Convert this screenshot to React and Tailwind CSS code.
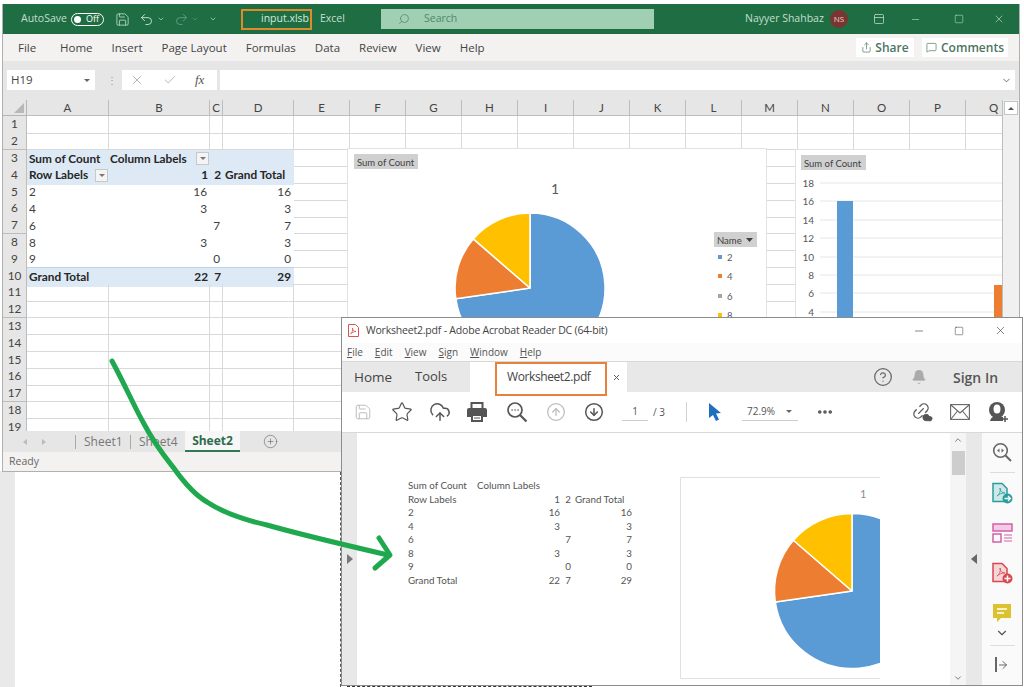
import {
  Save, Undo2, Redo2, ChevronDown, ChevronUp, Search, Minus, Square, X, Share, MessageSquare, Check,
  CircleHelp, Bell, Star, CloudUpload, CircleArrowUp, CircleArrowDown, Ellipsis, Link2, Cloud,
  PanelTop, CirclePlus, ArrowRight,
} from 'lucide-react'

const columns = ['A', 'B', 'C', 'D', 'E', 'F', 'G', 'H', 'I', 'J', 'K', 'L', 'M', 'N', 'O', 'P', 'Q']
const rowNumbers = Array.from({ length: 19 }, (_, i) => i + 1)

const pivot = {
  5: ['2', '16', '', '16'],
  6: ['4', '3', '', '3'],
  7: ['6', '', '7', '7'],
  8: ['8', '3', '', '3'],
  9: ['9', '', '0', '0'],
}

const pdfRows = [
  ['2', '16', '', '16'],
  ['4', '3', '', '3'],
  ['6', '', '7', '7'],
  ['8', '3', '', '3'],
  ['9', '', '0', '0'],
  ['Grand Total', '22', '7', '29'],
]

function FilterButton({ className }) {
  return (
    <span className={`flex h-[13px] w-[13px] items-center justify-center border border-[#c8c8c8] bg-[#f4f4f4] ${className}`}>
      <span className="h-0 w-0 border-x-[3px] border-t-[3px] border-x-transparent border-t-[#777]"></span>
    </span>
  )
}

function SheetCell({ row, col }) {
  const plain = 'border-r border-b border-[#d9d9d9]'
  const blue = 'bg-[#dde9f5] border-b border-[#dde9f5]'
  if (row === 3 || row === 4 || row === 10) {
    const bold = 'flex items-center font-bold text-[#262626] whitespace-nowrap'
    if (col === 'A' && row === 3) return <div className={`${blue} ${bold} pl-[2px]`}>Sum of Count</div>
    if (col === 'A' && row === 4) return <div className={`${blue} ${bold} pl-[2px] justify-between pr-[1px]`}>Row Labels<FilterButton /></div>
    if (col === 'A') return <div className={`${blue} ${bold} pl-[2px] border-t border-t-[#b9d2ea]`}>Grand Total</div>
    if (row === 3) {
      if (col === 'B') return <div className={`${blue} ${bold} pl-[1px] justify-between pr-[1px]`}>Column Labels<FilterButton /></div>
      if (col === 'C' || col === 'D') return <div className={blue}></div>
    }
    if (row === 4) {
      if (col === 'B') return <div className={`${blue} ${bold} justify-end pr-[2px]`}>1</div>
      if (col === 'C') return <div className={`${blue} ${bold} justify-end pr-[2px]`}>2</div>
      if (col === 'D') return <div className={`${blue} ${bold} pl-[2px]`}>Grand Total</div>
    }
    if (row === 10) {
      if (col === 'B') return <div className={`${blue} ${bold} justify-end pr-[2px] border-t border-t-[#b9d2ea]`}>22</div>
      if (col === 'C') return <div className={`${blue} ${bold} justify-end pr-[2px] border-t border-t-[#b9d2ea]`}>7</div>
      if (col === 'D') return <div className={`${blue} ${bold} justify-end pr-[3px] border-t border-t-[#b9d2ea]`}>29</div>
    }
  }
  if (pivot[row] && 'ABCD'.includes(col)) {
    const value = pivot[row]['ABCD'.indexOf(col)]
    if (col === 'A') return <div className="flex items-center pl-[2px] text-[#404040]">{value}</div>
    return <div className="flex items-center justify-end pr-[3px] text-[#404040]">{value}</div>
  }
  return <div className={plain}></div>
}

function PieChart({ cx, cy, r }) {
  const point = (deg) => {
    const a = (deg * Math.PI) / 180
    return `${(cx + r * Math.sin(a)).toFixed(1)} ${(cy - r * Math.cos(a)).toFixed(1)}`
  }
  return (
    <g stroke="#fff" strokeWidth="1.5" strokeLinejoin="round">
      <path d={`M${cx} ${cy} L${point(0)} A${r} ${r} 0 1 1 ${point(261.8)} Z`} fill="#5b9bd5" />
      <path d={`M${cx} ${cy} L${point(261.8)} A${r} ${r} 0 0 1 ${point(310.9)} Z`} fill="#ed7d31" />
      <path d={`M${cx} ${cy} L${point(310.9)} A${r} ${r} 0 0 1 ${point(360)} Z`} fill="#ffc000" />
    </g>
  )
}

function ChartOne() {
  return (
    <svg className="absolute left-[344px] top-[48px]" width="420" height="230" viewBox="347 148 420 230">
      <rect x="347.5" y="148.5" width="419" height="240" fill="#fff" stroke="#e2e2e2" />
      <rect x="354" y="154" width="64" height="15" fill="#d0d0d0" />
      <text x="357" y="165.5" fontSize="9.5" fill="#404040" fontFamily="Lato, sans-serif">Sum of Count</text>
      <text x="551" y="194" fontSize="14" fill="#595959" fontFamily="Lato, sans-serif">1</text>
      <PieChart cx={530} cy={288} r={75} />
      <rect x="714" y="232" width="43" height="15" fill="#d0d0d0" />
      <text x="717" y="243.5" fontSize="9.5" fill="#404040" fontFamily="Lato, sans-serif">Name</text>
      <path d="M746 238h7l-3.500 4z" fill="#404040" />
      <rect x="718" y="255" width="4" height="4" fill="#5b9bd5" />
      <text x="727" y="260.500" fontSize="9.5" fill="#595959" fontFamily="Lato, sans-serif">2</text>
      <rect x="718" y="274" width="4" height="4" fill="#ed7d31" />
      <text x="727" y="279.500" fontSize="9.5" fill="#595959" fontFamily="Lato, sans-serif">4</text>
      <rect x="718" y="294" width="4" height="4" fill="#a5a5a5" />
      <text x="727" y="299.500" fontSize="9.5" fill="#595959" fontFamily="Lato, sans-serif">6</text>
      <rect x="718" y="313" width="4" height="4" fill="#ffc000" />
      <text x="727" y="318.500" fontSize="9.5" fill="#595959" fontFamily="Lato, sans-serif">8</text>
    </svg>
  )
}

function ChartTwo() {
  const ticks = [[18, 183], [16, 201], [14, 220], [12, 238], [10, 257], [8, 275], [6, 293], [4, 312]]
  return (
    <svg className="absolute left-[792px] top-[49px]" width="207" height="230" viewBox="795 149 207 230">
      <rect x="795.5" y="149.500" width="230" height="240" fill="#fff" stroke="#e2e2e2" />
      <rect x="801" y="155" width="65" height="15" fill="#d0d0d0" />
      <text x="804" y="166.500" fontSize="9.5" fill="#404040" fontFamily="Lato, sans-serif">Sum of Count</text>
      {ticks.map(([label, y]) => (
        <g key={label}>
          <line x1="820" x2="1002" y1={y} y2={y} stroke="#e6e6e6" />
          <text x="814" y={y + 3.5} textAnchor="end" fontSize="10" fill="#595959" fontFamily="Lato, sans-serif">{label}</text>
        </g>
      ))}
      <rect x="837" y="201" width="16" height="130" fill="#5b9bd5" />
      <rect x="994" y="285" width="9" height="50" fill="#ed7d31" />
    </svg>
  )
}

function ExcelWindow() {
  return (
    <div className="absolute left-[2px] top-[4px] flex h-[468px] w-[1018px] flex-col overflow-hidden border-x border-b border-[#b0b0b0] bg-white">
      {/* title bar */}
      <div className="flex h-[30px] shrink-0 items-center bg-[#1f6e43] text-[10.5px] text-[#c3dfce]">
        <span className="ml-[18px] w-[44px]">AutoSave</span>
        <span className="ml-[6px] flex h-[13px] w-[33px] items-center justify-between rounded-full border border-white pl-[2px] pr-[4px] text-[9px] text-white">
          <span className="h-[7px] w-[7px] rounded-full bg-white"></span>Off
        </span>
        <Save className="ml-[11px] shrink-0 text-[#c3dfce]" size={15} strokeWidth={1.3} />
        <Undo2 className="ml-[9px] shrink-0 text-[#c3dfce]" size={15} strokeWidth={1.5} />
        <ChevronDown className="ml-[3px] shrink-0" size={8} strokeWidth={2} />
        <Redo2 className="ml-[9px] shrink-0 text-[#5f9c7d]" size={15} strokeWidth={1.5} />
        <ChevronDown className="ml-[2px] shrink-0 text-[#5f9c7d]" size={8} strokeWidth={2} />
        <ChevronDown className="ml-[10px] shrink-0" size={8} strokeWidth={2} />
        <span className="ml-[24px] flex h-[21px] w-[71px] shrink-0 items-center border-2 border-[#e08a2e] pl-[18px] text-[#d5e9dc]">input.xlsb</span>
        <span className="ml-[8px] w-[23px]">Excel</span>
        <span className="ml-[38px] flex h-[20px] w-[273px] shrink-0 items-center bg-[#a0cfb3] pl-[17px] text-[#4f8a69]">
          <Search className="-scale-x-100" size={12} strokeWidth={1.5} />
          <span className="ml-[14px]">Search</span>
        </span>
        <span className="ml-[91px] w-[75px] whitespace-nowrap">Nayyer Shahbaz</span>
        <span className="ml-[10px] flex h-[18px] w-[18px] shrink-0 items-center justify-center rounded-full bg-[#7b3531] text-[8px] text-[#e8d5d3]">NS</span>
        <PanelTop className="ml-[25px] shrink-0" size={12} strokeWidth={1.5} />
        <Minus className="ml-[25px] shrink-0" size={11} strokeWidth={1.3} />
        <Square className="ml-[33px] shrink-0" size={10} strokeWidth={1.3} />
        <X className="ml-[29px] shrink-0" size={12} strokeWidth={1.3} />
      </div>

      {/* ribbon tabs */}
      <div className="flex h-[27px] shrink-0 items-center bg-[#f3f2f1] text-[11.5px] text-[#444]">
        <span className="ml-[15px] w-[42px]">File</span>
        <div className="flex gap-[19px]">
          <span>Home</span>
          <span>Insert</span>
          <span>Page Layout</span>
          <span>Formulas</span>
          <span>Data</span>
          <span>Review</span>
          <span>View</span>
          <span>Help</span>
        </div>
        <div className="ml-auto mr-[11px] flex gap-[8px] text-[12px] font-semibold text-[#4c7563]">
          <span className="flex h-[19px] w-[58px] items-center justify-center gap-[3px] bg-white">
            <Share size={11} strokeWidth={1.5} />Share
          </span>
          <span className="flex h-[19px] w-[86px] items-center justify-center gap-[4px] bg-white">
            <MessageSquare size={11} strokeWidth={1.5} />Comments
          </span>
        </div>
      </div>

      {/* formula bar */}
      <div className="flex h-[39px] shrink-0 items-center bg-[#e6e6e6] pb-[1px] text-[11.5px] text-[#444]">
        <span className="ml-[4px] flex h-[20px] w-[88px] items-center justify-between bg-white pl-[4px] pr-[5px]">
          H19
          <span className="h-0 w-0 border-x-[3px] border-t-[3px] border-x-transparent border-t-[#666]"></span>
        </span>
        <span className="ml-[12px] w-[3px] text-[10px] leading-none text-[#999]">⋮</span>
        <span className="ml-[12px] flex h-[20px] w-[95px] items-center bg-white text-[#aaa]">
          <X className="ml-[8px]" size={14} strokeWidth={1.5} />
          <Check className="ml-[19px]" size={14} strokeWidth={1.5} />
          <span className="ml-[18px] font-['Liberation_Serif',serif] text-[13px] italic text-[#555]">fx</span>
        </span>
        <span className="ml-[3px] flex h-[20px] w-[795px] items-center justify-end bg-white pr-[3px] text-[#666]">
          <ChevronDown size={11} strokeWidth={2} />
        </span>
      </div>

      {/* sheet */}
      <div className="relative flex h-[331px] shrink-0 overflow-hidden bg-white">
        <div className="w-[999px] shrink-0 overflow-hidden">
          <div className="grid w-[1019px] grid-cols-[24px_82px_101px_13px_71px_56px_56px_56px_56px_56px_56px_56px_56px_56px_56px_56px_56px_56px] auto-rows-[16.8px] font-['Lato',sans-serif] text-[11.8px]">
            <div className="flex h-[16px] items-end justify-end border-r border-b border-[#b5b5b5] bg-[#e6e6e6] pb-[2px] pr-[2px]">
              <span className="h-0 w-0 border-b-[10px] border-l-[10px] border-b-[#b8b8b8] border-l-transparent"></span>
            </div>
            {columns.map((c) => (
              <div key={c} className="flex h-[16px] items-center justify-center border-r border-b border-[#bdbdbd] bg-[#e6e6e6] text-[11.5px] text-[#444]">{c}</div>
            ))}
            {rowNumbers.map((row) => [
              <div key={`r${row}`} className="-mt-[0.8px] flex items-center justify-center border-r border-b border-[#bdbdbd] bg-[#e6e6e6] text-[#444]">{row}</div>,
              ...columns.map((col) => (
                <div key={`${col}${row}`} className="-mt-[0.8px] grid">
                  <SheetCell row={row} col={col} />
                </div>
              )),
            ])}
          </div>
        </div>
        <div className="flex w-[17px] shrink-0 flex-col items-center border-l border-[#bdbdbd] bg-[#f0f0f0] pt-[1px]">
          <span className="flex h-[14px] w-[14px] items-center justify-center border border-[#c4c4c4] bg-white">
            <span className="h-0 w-0 border-x-[3px] border-b-[3px] border-x-transparent border-b-[#555]"></span>
          </span>
        </div>
        <ChartOne />
        <ChartTwo />
      </div>

      {/* sheet tabs */}
      <div className="flex h-[21px] shrink-0 items-center bg-[#e6e6e6] text-[12px] text-[#777]">
        <span className="ml-[20px] h-0 w-0 border-y-[3px] border-r-[4px] border-y-transparent border-r-[#bbb]"></span>
        <span className="ml-[15px] h-0 w-0 border-y-[3px] border-l-[4px] border-y-transparent border-l-[#bbb]"></span>
        <span className="ml-[29px] h-[14px] w-px bg-[#aaa]"></span>
        <span className="ml-[8px] w-[36px]">Sheet1</span>
        <span className="ml-[10px] h-[14px] w-px bg-[#aaa]"></span>
        <span className="ml-[8px] w-[36px]">Sheet4</span>
        <span className="ml-[10px] flex h-[21px] w-[55px] items-center justify-center border-b-2 border-[#2f7a52] bg-[#f7f7f7] font-bold text-[#2f6b4d]">Sheet2</span>
        <CirclePlus className="ml-[23px] text-[#666]" size={15} strokeWidth={1} />
      </div>

      {/* status bar */}
      <div className="flex h-[19px] shrink-0 items-center bg-[#f3f2f1] pl-[6px] text-[10.5px] text-[#666]">Ready</div>
    </div>
  )
}

function DocIcon({ color, badge }) {
  return (
    <svg width="22" height="22" viewBox="0 0 22 22" fill="none">
      <path d="M2 1.500h9l5 5v13H2z" fill={`${color}33`} stroke={color} strokeWidth="1.500" />
      <path d="M6 14c2-1 4-5 3-8 0 3 2 5 5 5-3 0-6 1-8 3z" stroke={color} strokeWidth="0.800" />
      <circle cx="16.500" cy="16.500" r="5" fill={color} />
      {badge === 'arrow' ? (
        <path d="M13.500 16.500h6M17 14l2.500 2.500L17 19" stroke="#fff" strokeWidth="1.300" />
      ) : (
        <path d="M13.500 16.500h6M16.500 13.500v6" stroke="#fff" strokeWidth="1.500" />
      )}
    </svg>
  )
}

function AcrobatWindow() {
  return (
    <div className="absolute left-[341px] top-[317px] flex h-[369px] w-[682px] flex-col overflow-hidden border border-[#8c8c8c] bg-white font-['Open_Sans',sans-serif] text-[#444]">
      <div className="flex h-[25px] shrink-0 items-center text-[10.5px] tracking-[-0.2px]">
        <svg className="ml-[6px]" width="11" height="13" viewBox="0 0 11 13" fill="none">
          <path d="M.500.500h7l3 3v9H.500z" fill="#fff" stroke="#d9534f" />
          <path d="M2.500 10c1.500-1 2.500-3.500 2-6 0 2 1.500 3.500 3.500 3.500-2 0-4 1-5.500 2.500z" stroke="#d9534f" strokeWidth=".8" />
        </svg>
        <span className="ml-[7px] w-[244px] whitespace-nowrap">Worksheet2.pdf - Adobe Acrobat Reader DC (64-bit)</span>
        <Minus className="ml-[303px] shrink-0" size={12} strokeWidth={1.3} />
        <Square className="ml-[29px] shrink-0" size={10} strokeWidth={1.3} />
        <X className="ml-[30px] shrink-0" size={13} strokeWidth={1.2} />
      </div>

      <div className="flex h-[18px] shrink-0 items-center gap-[12px] bg-[#fbfbfb] pl-[5px] text-[10px] text-[#555]">
        <span><u>F</u>ile</span>
        <span><u>E</u>dit</span>
        <span><u>V</u>iew</span>
        <span><u>S</u>ign</span>
        <span><u>W</u>indow</span>
        <span><u>H</u>elp</span>
      </div>

      <div className="flex h-[31px] shrink-0 items-center border-t border-[#d8d8d8] bg-[#e8e8e8] text-[13.5px]">
        <span className="ml-[12px] w-[38px]">Home</span>
        <span className="ml-[23px] w-[33px] whitespace-nowrap text-[13px]">Tools</span>
        <div className="relative ml-[22px] flex h-[31px] w-[157px] items-center bg-white">
          <span className="ml-[37px] w-[84px] whitespace-nowrap text-[12px] tracking-[-0.4px]">Worksheet2.pdf</span>
          <X className="ml-[21px] text-[#555]" size={9} strokeWidth={2.500} />
        </div>
        <CircleHelp className="ml-[246px] shrink-0 text-[#666]" size={20} strokeWidth={1.500} />
        <Bell className="ml-[18px] shrink-0 text-[#aaa]" size={16} fill="#aaa" strokeWidth={1} />
        <span className="ml-[26px] w-[48px] whitespace-nowrap text-[14px] font-semibold text-[#555]">Sign In</span>
      </div>

      <div className="flex h-[41px] shrink-0 items-center border-b border-[#d8d8d8] text-[#555]">
        <Save className="ml-[12px] shrink-0 text-[#bbb]" size={18} strokeWidth={1.300} />
        <Star className="ml-[19px] shrink-0" size={22} strokeWidth={1.300} />
        <CloudUpload className="ml-[16px] shrink-0" size={22} strokeWidth={1.600} />
        <svg className="ml-[15px] shrink-0" width="22" height="22" viewBox="0 0 22 22" fill="none">
          <path d="M5.500 7V2h11v5" stroke="#555" strokeWidth="2" />
          <path d="M3 7h16a2 2 0 0 1 2 2v7h-4v-3H5v3H1V9a2 2 0 0 1 2-2z" fill="#555" />
          <rect x="6" y="14" width="10" height="6" stroke="#555" strokeWidth="2" />
          <path d="M8 17h6" stroke="#555" />
        </svg>
        <svg className="ml-[18px] shrink-0" width="22" height="22" viewBox="0 0 22 22" fill="none" stroke="currentColor" strokeWidth="1.700">
          <circle cx="9" cy="9" r="7" />
          <path d="M14 14l6.500 6.500" strokeWidth="2.200" />
          <path d="M5.500 9h1.200M8.500 9h1.200M11.500 9h1.200" />
        </svg>
        <CircleArrowUp className="ml-[18px] shrink-0 text-[#bbb]" size={20} strokeWidth={1.500} />
        <CircleArrowDown className="ml-[18px] shrink-0" size={20} strokeWidth={1.800} />
        <span className="ml-[18px] w-[26px] border-b border-[#ccc] pb-[1px] text-center text-[10px]">1</span>
        <span className="ml-[5px] w-[15px] whitespace-nowrap text-[10px]">/ 3</span>
        <span className="ml-[18px] h-[20px] w-px bg-[#d0d0d0]"></span>
        <svg className="ml-[21px] shrink-0" width="14" height="20" viewBox="0 0 14 20">
          <path d="M1 1l12 10-5 .5 3 6-3 1.500-3-6L1 16z" fill="#1f6fc0" />
        </svg>
        <span className="ml-[20px] flex w-[56px] items-center justify-between border-b border-[#ccc] pb-[1px] pl-[5px] pr-[6px] text-[10px]">
          72.9%
          <span className="h-0 w-0 border-x-[3px] border-t-[3px] border-x-transparent border-t-[#666]"></span>
        </span>
        <Ellipsis className="ml-[18px] shrink-0" size={18} strokeWidth={2.800} />
        <span className="relative ml-[77px] h-[22px] w-[22px] shrink-0">
          <Link2 className="-rotate-45" size={20} strokeWidth={1.600} />
          <Cloud className="absolute bottom-0 right-0" size={11} fill="currentColor" />
        </span>
        <svg className="ml-[17px] shrink-0" width="20" height="16" viewBox="0 0 20 16" fill="none" stroke="#666" strokeWidth="1.100">
          <rect x=".6" y=".6" width="18.800" height="14.800" />
          <path d="M1 1l9 8 9-8M1 15l6.500-8M19 15l-6.500-8" />
        </svg>
        <svg className="ml-[17px] shrink-0" width="22" height="22" viewBox="0 0 22 22" fill="none">
          <circle cx="10" cy="9" r="8" fill="#555" />
          <ellipse cx="10" cy="8" rx="3.500" ry="4.500" fill="#fff" />
          <path d="M3 20c1-4 4-5 7-5s6 1 6 1v4z" fill="#555" />
          <path d="M15 18h6M18 15v6" stroke="#555" strokeWidth="1.500" />
        </svg>
      </div>

      <div className="flex min-h-0 flex-1">
        <div className="flex w-[15px] shrink-0 items-center justify-center bg-[#e8e8e8]">
          <span className="h-0 w-0 border-y-[5px] border-l-[6px] border-y-transparent border-l-[#777]"></span>
        </div>

        <div className="flex w-[593px] shrink-0 items-start bg-white pl-[51px] pt-[45px]">
          <div className="grid w-[224px] shrink-0 grid-cols-[69px_84px_12px_59px] auto-rows-[13.500px] font-['Lato',sans-serif] text-[9.800px] text-[#555]">
            <span className="whitespace-nowrap">Sum of Count</span>
            <span className="whitespace-nowrap">Column Labels</span>
            <span></span>
            <span></span>
            <span className="whitespace-nowrap">Row Labels</span>
            <span className="pr-[1px] text-right">1</span>
            <span className="pr-[2px] text-right">2</span>
            <span className="whitespace-nowrap pl-[2px]">Grand Total</span>
            {pdfRows.map((r) => (
              <div key={r[0]} className="contents">
                <span>{r[0]}</span>
                <span className="pr-[1px] text-right">{r[1]}</span>
                <span className="pr-[2px] text-right">{r[2]}</span>
                <span className="text-right">{r[3]}</span>
              </div>
            ))}
          </div>
          <svg className="ml-[48px] -mt-[1px] shrink-0" width="200" height="203" viewBox="680 477 200 203">
            <path d="M880 477.500H680.500V678.500H880" fill="none" stroke="#e0e0e0" />
            <text x="860" y="498" fontSize="11" fill="#8c8c8c" fontFamily="Lato, sans-serif">1</text>
            <PieChart cx={852} cy={591} r={77.500} />
          </svg>
        </div>

        <div className="flex w-[16px] shrink-0 flex-col items-center justify-between bg-[#f5f5f5] py-[2px] text-[#666]">
          <div className="flex flex-col items-center">
            <ChevronUp size={10} strokeWidth={2} />
            <span className="mt-[6px] h-[24px] w-[13px] bg-[#cdcdcd]"></span>
          </div>
          <ChevronDown size={10} strokeWidth={2} />
        </div>

        <div className="flex w-[16px] shrink-0 items-center justify-center bg-[#e8e8e8]">
          <span className="h-0 w-0 border-y-[5px] border-r-[6px] border-y-transparent border-r-[#666]"></span>
        </div>

        <div className="flex flex-1 flex-col items-center bg-[#fafafa]">
          <svg className="mt-[9px] shrink-0" width="20" height="20" viewBox="0 0 20 20" fill="none" stroke="#666" strokeWidth="1.600">
            <circle cx="8.500" cy="8.500" r="6.800" />
            <path d="M13.500 13.500l5.500 5.500" strokeWidth="2" />
            <path d="M7.500 6.500l-2.500 2 2.500 2zM9.500 6.500l2.500 2-2.500 2z" fill="#666" stroke="none" />
          </svg>
          <span className="mt-[10px] h-px w-[25px] bg-[#ddd]"></span>
          <span className="mt-[9px] h-[22px] shrink-0"><DocIcon color="#2a9d9d" badge="arrow" /></span>
          <svg className="mt-[19px] shrink-0" width="21" height="20" viewBox="0 0 21 20" fill="none" stroke="#d160a8" strokeWidth="1.500">
            <rect x="1" y="1" width="19" height="7" fill="#f4cbe5" />
            <rect x="1" y="11" width="8" height="8" />
            <path d="M12 12h8M12 15h8M12 18h8" strokeWidth="1" />
          </svg>
          <span className="mt-[19px] h-[22px] shrink-0"><DocIcon color="#d9474f" badge="plus" /></span>
          <svg className="mt-[19px] shrink-0" width="20" height="20" viewBox="0 0 20 20">
            <path d="M1 1h18v14H9l-4 4v-4H1z" fill="#dcc22e" />
            <path d="M5 6h10M5 10h7" stroke="#fff" strokeWidth="1.300" />
          </svg>
          <ChevronDown className="mt-[3px] shrink-0 text-[#555]" size={14} strokeWidth={2} />
          <span className="mt-[5px] h-px w-[25px] bg-[#ddd]"></span>
          <span className="mt-[11px] flex shrink-0 items-center text-[#666]">
            <span className="h-[15px] w-[2px] bg-[#666]"></span>
            <ArrowRight size={12} strokeWidth={2} />
          </span>
        </div>
      </div>

      {/* orange highlight round the active tab */}
      <div className="absolute left-[153px] top-[44px] h-[34px] w-[112px] border-2 border-[#e8823a]"></div>
    </div>
  )
}

export default function App() {
  return (
    <div className="relative h-[687px] w-[1024px] overflow-hidden bg-white font-['Open_Sans',sans-serif]">
      <div className="absolute bottom-0 left-0 top-[471px] w-[15px] bg-[#e9e9e9]"></div>
      <div className="absolute bottom-0 left-[340px] top-[472px] border-l border-dashed border-[#555]"></div>
      <div className="absolute bottom-0 left-[347px] h-px w-[245px] border-t border-dashed border-[#333]"></div>
      <ExcelWindow />
      <AcrobatWindow />
      {/* green arrow from the sheet to the pdf */}
      <svg className="absolute left-0 top-0" width="1024" height="687" viewBox="0 0 1024 687" fill="none" stroke="#20a84f" strokeWidth="5" strokeLinecap="round" strokeLinejoin="round">
        <path d="M112 361C125 385 135 408 143 422C155 445 165 457 173 467C185 484 195 495 207 502C225 514 245 520 267 525C295 533 345 545 388 555" />
        <path d="M379 538L390 555L375 568" />
      </svg>
    </div>
  )
}
